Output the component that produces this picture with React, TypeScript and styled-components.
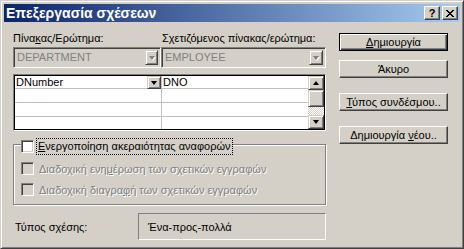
import styled, { createGlobalStyle } from "styled-components";

const GlobalStyle = createGlobalStyle`
  html, body {
    margin: 0;
    padding: 0;
    background: #d4d0c8;
  }
  * {
    box-sizing: border-box;
  }
`;

const Window = styled.div`
  width: 464px;
  height: 249px;
  background: #d4d0c8;
  border: 1px solid;
  border-color: #d4d0c8 #404040 #404040 #d4d0c8;
  box-shadow: inset 1px 1px 0 #fff, inset -1px -1px 0 #808080;
  padding: 3px;
  font-family: "Liberation Sans", Arial, sans-serif;
  font-size: 11px;
  color: #000;
  display: flex;
  flex-direction: column;
`;

const TitleBar = styled.div`
  height: 18px;
  display: flex;
  align-items: center;
  padding: 0 2px 0 2px;
  background: linear-gradient(to right, #0a246a, #a6caf0);
  color: #fff;
  font-weight: bold;
  font-size: 14px;
`;

const TitleText = styled.span`
  flex: 1;
  line-height: 18px;
`;

const TitleButton = styled.div<{ $gap?: number }>`
  width: 16px;
  height: 14px;
  margin-left: ${(p) => p.$gap ?? 0}px;
  background: #d4d0c8;
  border: 1px solid;
  border-color: #fff #404040 #404040 #fff;
  box-shadow: inset -1px -1px 0 #808080;
  display: flex;
  align-items: center;
  justify-content: center;
  color: #000;
  font-size: 11px;
  font-weight: bold;
  line-height: 1;
`;

const Body = styled.div`
  display: flex;
  padding: 10px 0 0 9px;
`;

const LeftColumn = styled.div`
  width: 313px;
  display: flex;
  flex-direction: column;
`;

const RightColumn = styled.div`
  width: 109px;
  margin-left: 13px;
  padding-top: 1px;
  display: flex;
  flex-direction: column;
`;

const LabelRow = styled.div`
  display: flex;
  height: 13px;
  line-height: 13px;
  margin-bottom: 2px;
`;

const Label = styled.span<{ $width?: number }>`
  width: ${(p) => (p.$width ? `${p.$width}px` : "auto")};
  padding-left: ${(p) => (p.$width ? 0 : 1)}px;
  white-space: nowrap;
`;

const ComboRow = styled.div`
  display: flex;
  height: 21px;
`;

const Combo = styled.div<{ $width: number }>`
  width: ${(p) => p.$width}px;
  height: 21px;
  display: flex;
  border: 1px solid;
  border-color: #808080 #fff #fff #808080;
  box-shadow: inset 1px 1px 0 #404040, inset -1px -1px 0 #d4d0c8;
  padding: 2px;
`;

const ComboText = styled.span`
  flex: 1;
  color: #808080;
  line-height: 15px;
  padding-left: 1px;
`;

const ArrowButton = styled.div<{ $w: number; $h: number }>`
  width: ${(p) => p.$w}px;
  height: ${(p) => p.$h}px;
  background: #d4d0c8;
  border: 1px solid;
  border-color: #d4d0c8 #404040 #404040 #d4d0c8;
  box-shadow: inset 1px 1px 0 #fff, inset -1px -1px 0 #808080;
  display: flex;
  align-items: center;
  justify-content: center;
  flex-shrink: 0;
`;

const Triangle = styled.span<{ $up?: boolean; $disabled?: boolean }>`
  width: 0;
  height: 0;
  border-left: 3.5px solid transparent;
  border-right: 3.5px solid transparent;
  ${(p) =>
    p.$up
      ? `border-bottom: 4px solid ${p.$disabled ? "#808080" : "#000"};`
      : `border-top: 4px solid ${p.$disabled ? "#808080" : "#000"};`}
  filter: ${(p) => (p.$disabled ? "drop-shadow(1px 1px 0 #fff)" : "none")};
`;

const Grid = styled.div`
  margin-top: 6px;
  height: 57px;
  display: flex;
  border: 1px solid;
  border-color: #808080 #fff #fff #808080;
  background: #fff;
`;

const GridInner = styled.div`
  flex: 1;
  display: flex;
  border: 1px solid #000;
`;

const Rows = styled.div`
  flex: 1;
  display: flex;
  flex-direction: column;
`;

const Row = styled.div<{ $h: number }>`
  height: ${(p) => p.$h}px;
  display: flex;
  border-bottom: 1px solid #c0c0c0;

  &:last-child {
    border-bottom: none;
  }
`;

const Cell = styled.div<{ $width?: number }>`
  ${(p) => (p.$width ? `width: ${p.$width}px;` : "flex: 1;")}
  display: flex;
  align-items: stretch;
  border-right: ${(p) => (p.$width ? "1px solid #c0c0c0" : "none")};
  line-height: 13px;
`;

const CellText = styled.span`
  flex: 1;
  padding-left: 1px;
`;

const Scrollbar = styled.div`
  width: 16px;
  display: flex;
  flex-direction: column;
`;

const Thumb = styled.div`
  height: 17px;
  background: #d4d0c8;
  border: 1px solid;
  border-color: #d4d0c8 #404040 #404040 #d4d0c8;
  box-shadow: inset 1px 1px 0 #fff, inset -1px -1px 0 #808080;
`;

const Track = styled.div`
  flex: 1;
  background: repeating-conic-gradient(#fff 0 25%, #d4d0c8 0 50%) 0 0 / 2px 2px;
`;

const GroupBox = styled.div`
  position: relative;
  margin-top: 13px;
  height: 61px;
  border: 1px solid #808080;
  box-shadow: inset 1px 1px 0 #fff, 1px 1px 0 #fff;
  padding: 17px 0 0 7px;
  display: flex;
  flex-direction: column;
  gap: 8px;
`;

const Legend = styled.div`
  position: absolute;
  top: -6px;
  left: 7px;
  background: #d4d0c8;
  display: flex;
  align-items: center;
  gap: 3px;
  padding-right: 1px;
`;

const CheckRow = styled.div<{ $disabled?: boolean }>`
  display: flex;
  align-items: center;
  gap: 5px;
  height: 13px;
  color: ${(p) => (p.$disabled ? "#808080" : "#000")};
  text-shadow: ${(p) => (p.$disabled ? "1px 1px 0 #fff" : "none")};
  white-space: nowrap;
`;

const CheckBox = styled.span<{ $disabled?: boolean }>`
  width: 13px;
  height: 13px;
  flex-shrink: 0;
  background: ${(p) => (p.$disabled ? "#d4d0c8" : "#fff")};
  border: 1px solid;
  border-color: #808080 #fff #fff #808080;
  box-shadow: inset 1px 1px 0 #404040, inset -1px -1px 0 #d4d0c8;
`;

const FocusLabel = styled.span`
  outline: 1px dotted #000;
  outline-offset: 0;
  padding: 1px 1px;
  line-height: 13px;
`;

const TypeRow = styled.div`
  margin-top: 8px;
  display: flex;
  align-items: center;
`;

const TypeLabel = styled.span`
  width: 125px;
  padding-left: 2px;
`;

const TypeBox = styled.div`
  width: 188px;
  height: 27px;
  border: 1px solid;
  border-color: #808080 #fff #fff #808080;
  display: flex;
  align-items: center;
  padding-left: 9px;
`;

const Button = styled.div<{ $gap: number; $default?: boolean }>`
  height: 18px;
  margin-top: ${(p) => p.$gap}px;
  background: #d4d0c8;
  display: flex;
  align-items: center;
  justify-content: center;
  white-space: nowrap;
  border: 1px solid;
  border-color: ${(p) =>
    p.$default ? "#000" : "#fff #404040 #404040 #fff"};
  box-shadow: ${(p) =>
    p.$default
      ? "inset 1px 1px 0 #fff, inset -1px -1px 0 #404040, inset -2px -2px 0 #808080"
      : "inset -1px -1px 0 #808080"};
`;

const CloseIcon = () => (
  <svg width="8" height="7" viewBox="0 0 8 7">
    <path
      d="M0 0h2v1h1v1h2v-1h1v-1h2v1h-1v1h-1v1h-1v1h1v1h1v1h1v1h-2v-1h-1v-1h-2v1h-1v1h-2v-1h1v-1h1v-1h1v-1h-1v-1h-1v-1h-1z"
      fill="#000"
    />
  </svg>
);

const App = () => {
  return (
    <>
      <GlobalStyle />
      <Window>
        <TitleBar>
          <TitleText>Επεξεργασία σχέσεων</TitleText>
          <TitleButton>?</TitleButton>
          <TitleButton $gap={2}>
            <CloseIcon />
          </TitleButton>
        </TitleBar>
        <Body>
          <LeftColumn>
            <LabelRow>
              <Label $width={148}>
                Πίνα<u>κ</u>ας/Ερώτημα:
              </Label>
              <Label>
                Σ<u>χ</u>ετιζόμενος πίνακας/ερώτημα:
              </Label>
            </LabelRow>
            <ComboRow>
              <Combo $width={148}>
                <ComboText>DEPARTMENT</ComboText>
                <ArrowButton $w={13} $h={15}>
                  <Triangle $disabled />
                </ArrowButton>
              </Combo>
              <Combo $width={165}>
                <ComboText>EMPLOYEE</ComboText>
                <ArrowButton $w={14} $h={15}>
                  <Triangle $disabled />
                </ArrowButton>
              </Combo>
            </ComboRow>
            <Grid>
              <GridInner>
                <Rows>
                  <Row $h={13}>
                    <Cell $width={147}>
                      <CellText>DNumber</CellText>
                      <ArrowButton $w={14} $h={13}>
                        <Triangle />
                      </ArrowButton>
                    </Cell>
                    <Cell>
                      <CellText>DNO</CellText>
                    </Cell>
                  </Row>
                  <Row $h={14}>
                    <Cell $width={147} />
                    <Cell />
                  </Row>
                  <Row $h={14}>
                    <Cell $width={147} />
                    <Cell />
                  </Row>
                  <Row $h={12}>
                    <Cell $width={147} />
                    <Cell />
                  </Row>
                </Rows>
                <Scrollbar>
                  <ArrowButton $w={16} $h={14}>
                    <Triangle $up />
                  </ArrowButton>
                  <Thumb />
                  <Track />
                  <ArrowButton $w={16} $h={14}>
                    <Triangle />
                  </ArrowButton>
                </Scrollbar>
              </GridInner>
            </Grid>
            <GroupBox>
              <Legend>
                <CheckBox />
                <FocusLabel>
                  <u>Ε</u>νεργοποίηση ακεραιότητας αναφορών
                </FocusLabel>
              </Legend>
              <CheckRow $disabled>
                <CheckBox $disabled />
                <span>
                  Διαδοχική ενη<u>μ</u>έρωση των σχετικών εγγραφών
                </span>
              </CheckRow>
              <CheckRow $disabled>
                <CheckBox $disabled />
                <span>
                  Διαδοχική διαγρα<u>φ</u>ή των σχετικών εγγραφών
                </span>
              </CheckRow>
            </GroupBox>
            <TypeRow>
              <TypeLabel>Τύπος σχέσης:</TypeLabel>
              <TypeBox>Ένα-προς-πολλά</TypeBox>
            </TypeRow>
          </LeftColumn>
          <RightColumn>
            <Button $gap={0} $default>
              <span>
                <u>Δ</u>ημιουργία
              </span>
            </Button>
            <Button $gap={9}>Άκυρο</Button>
            <Button $gap={15}>
              <span>
                <u>Τ</u>ύπος συνδέσμου..
              </span>
            </Button>
            <Button $gap={15}>
              <span>
                Δημιουργία <u>ν</u>έου..
              </span>
            </Button>
          </RightColumn>
        </Body>
      </Window>
    </>
  );
};

export default App;
